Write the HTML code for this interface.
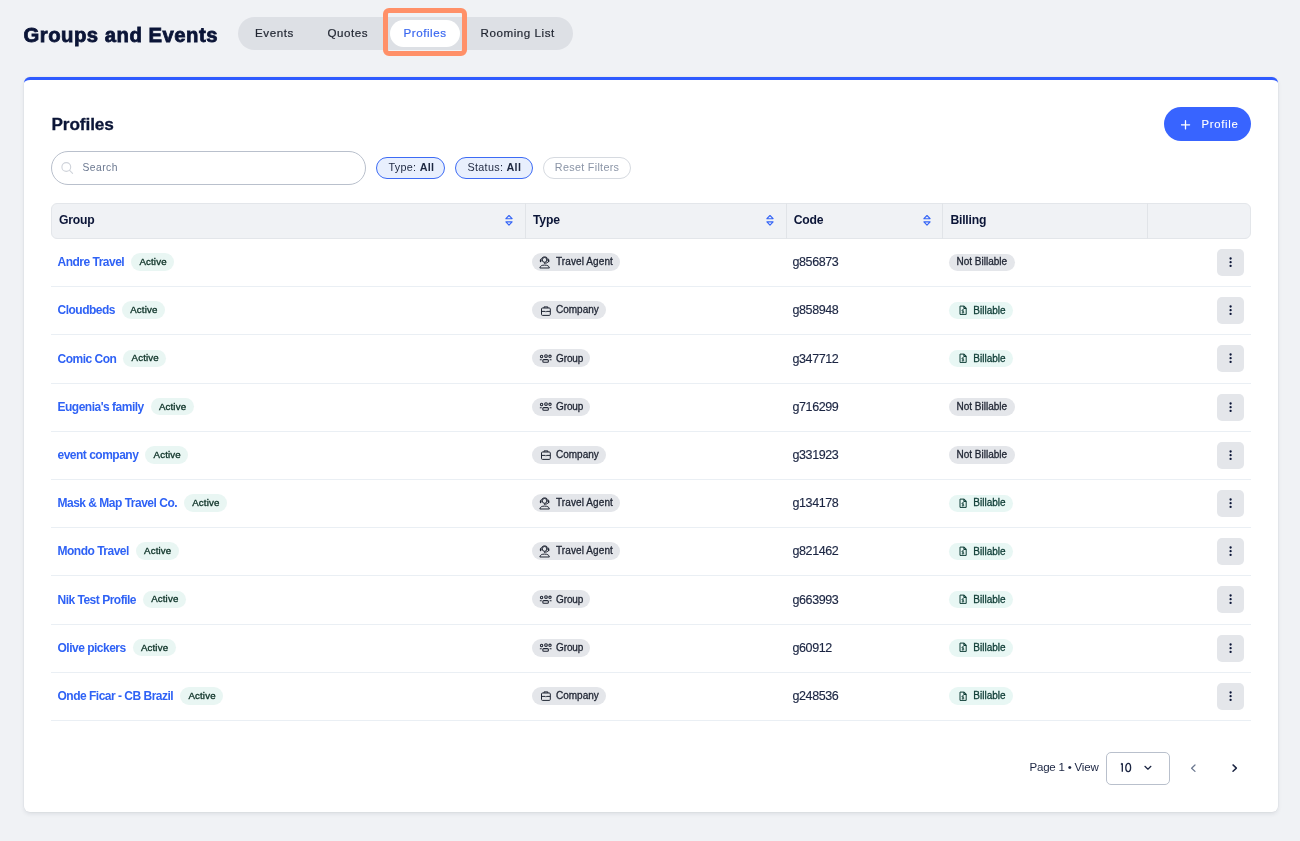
<!DOCTYPE html>
<html><head><meta charset="utf-8">
<style>
*{box-sizing:border-box;margin:0;padding:0}
html,body{width:1300px;height:841px;overflow:hidden}
body{background:#f0f2f5;font-family:"Liberation Sans",sans-serif;position:relative;color:#0b1537}
.abs{position:absolute;white-space:nowrap;line-height:1}
.title{left:23.5px;top:24.7px;font-size:20.3px;font-weight:bold;letter-spacing:.5px;color:#0b1537;-webkit-text-stroke:.8px #0b1537}
.tabs{left:238px;top:17px;width:335px;height:33px;border-radius:17px;background:#dde0e5}
.tab{font-size:11.6px;top:27.4px;color:#1f2430;letter-spacing:.55px;-webkit-text-stroke:.2px #1f2430}
.tabon{left:390px;top:20px;width:70px;height:27px;border-radius:14px;background:#fff}
.hl{left:383px;top:8px;width:84px;height:48px;border:5.5px solid #ff9068;border-radius:6px}
.card{left:24px;top:77px;width:1254px;height:735px;background:#fff;border-radius:6px;border-top:3px solid #2f5bff;box-shadow:0 0 0 .5px rgba(20,30,60,.05),0 2px 4px rgba(20,30,60,.09)}
.h2{left:51.5px;top:115.9px;font-size:17.2px;font-weight:bold;color:#0b1537;-webkit-text-stroke:.3px #0b1537;letter-spacing:-.1px}
.btn{left:1164px;top:107px;width:87px;height:34px;border-radius:17px;background:#3864ff}
.btnt{left:1201.5px;top:119px;font-size:11.3px;letter-spacing:.7px;color:#fff;-webkit-text-stroke:.1px #fff}
.search{left:51px;top:151px;width:315px;height:34px;border-radius:17px;border:1px solid #b9c0cc;background:#fff}
.searcht{left:82.5px;top:163px;font-size:10.3px;letter-spacing:.45px;color:#6b7890}
.chip{top:157px;height:22px;border-radius:11px;border:1px solid #3d6bf5;background:#e8effd}
.chipt{top:161.7px;font-size:10.8px;color:#1d2740;letter-spacing:.3px}
.thead{left:51px;top:203px;width:1200px;height:36px;border-radius:6px;border:1px solid #e3e6ea;background:#f0f2f5}
.sep{top:203px;width:1px;height:36px;background:#e1e4e8}
.th{top:213.7px;font-size:12.2px;font-weight:bold;color:#0b1537;letter-spacing:-.2px}
.sort{top:214px}
.r{position:absolute;left:51px;width:1200px;height:48.2px}
.r>span{position:absolute;white-space:nowrap;line-height:1}
.gcell{left:6.5px;top:14.8px;display:flex;align-items:flex-start;height:17.5px}
.link{font-size:12px;font-weight:bold;color:#2f62f5;letter-spacing:-.5px;margin-top:2.9px;margin-right:6.8px;line-height:1}
.bt{display:block;font-size:10px;line-height:1;-webkit-text-stroke:.3px currentColor;position:relative}
.badge{height:17.5px;border-radius:9px;padding:0 7.6px 0 8.4px;display:flex;align-items:flex-start}
.badge .bt{top:3.8px;font-size:9.7px;letter-spacing:.15px;-webkit-text-stroke:.35px currentColor}
.active{background:#e9f6f3;color:#0f3429}
.tbadge{left:481px;top:14.6px;height:18px;border-radius:9px;background:#e4e6ea;color:#1f2533;display:flex;align-items:flex-start;padding:0 7px}
.tbadge svg{margin:2.5px 5px 0 0}
.tbadge .bt{top:4.2px}
.code{left:741.5px;top:17.8px;font-size:12.5px;letter-spacing:-.4px;color:#1b2542;-webkit-text-stroke:.15px #1b2542}
.bbadge{left:898px;top:15px;height:17.6px;border-radius:9px;display:flex;align-items:flex-start;padding:0 7px}
.bbadge .bt{top:3.9px}
.billable{background:#e8f7f4;color:#0f3d36}
.billable svg{margin:3.3px 5.8px 0 2.5px}
.notbill{background:#e4e6ea;color:#1f2533;padding:0 7.5px}
.kebab{left:1166px;top:10.5px;width:27px;height:27px;border-radius:5px;background:#e4e6ea}
.kebab svg{display:block;fill:#0b1537}

.rl{left:51px;width:1200px;height:1px;background:#eaeff4}
.pgt{left:1029.5px;top:762.4px;font-size:11.5px;letter-spacing:-.2px;color:#1b2542}
.sel{left:1106px;top:752px;width:64px;height:33px;border-radius:5px;border:1px solid #b9c0cc;background:#fff}
.selt{left:1120px;top:762px;font-size:12.3px;letter-spacing:-1.1px;color:#1b2542}
</style></head><body><div style="position:absolute;left:0;top:0;width:1300px;height:841px;will-change:transform">
<div class="abs title">Groups and Events</div>
<div class="abs tabs"></div>
<div class="abs tabon"></div>
<div class="abs tab" style="left:255px">Events</div>
<div class="abs tab" style="left:327.5px">Quotes</div>
<div class="abs tab" style="left:403.5px;color:#3b68f0;-webkit-text-stroke:.2px #3b68f0">Profiles</div>
<div class="abs tab" style="left:480.5px">Rooming List</div>
<div class="abs hl"></div>

<div class="abs card"></div>
<div class="abs h2">Profiles</div>
<div class="abs btn"></div>
<svg class="abs" style="left:1181px;top:119.6px" width="10" height="10" viewBox="0 0 10 10"><path d="M4.5 .7v8.2M.4 4.8h8.2" stroke="#fff" stroke-width="1.3" stroke-linecap="round"/></svg>
<div class="abs btnt">Profile</div>
<div class="abs search"></div>
<svg class="abs" style="left:60px;top:161px" width="14" height="14" viewBox="0 0 14 14" fill="none" stroke="#cfd3da" stroke-width="1.1"><circle cx="6.3" cy="6" r="4.4"/><path d="M9.6 9.4l3 3" stroke-linecap="round"/></svg>
<div class="abs searcht">Search</div>
<div class="abs chip" style="left:376px;width:69px"></div>
<div class="abs chip" style="left:455px;width:78px"></div>
<div class="abs chip" style="left:543px;width:88px;border-color:#d6dae0;background:#fff"></div>
<div class="abs chipt" style="left:388.5px">Type: <b>All</b></div>
<div class="abs chipt" style="left:467.5px">Status: <b>All</b></div>
<div class="abs chipt" style="left:554.8px;color:#8a94a6">Reset Filters</div>

<div class="abs thead"></div>
<div class="abs sep" style="left:525px"></div>
<div class="abs sep" style="left:786px"></div>
<div class="abs sep" style="left:942px"></div>
<div class="abs sep" style="left:1147px"></div>
<div class="abs th" style="left:59px">Group</div>
<div class="abs th" style="left:533px">Type</div>
<div class="abs th" style="left:793.7px">Code</div>
<div class="abs th" style="left:950.4px">Billing</div>
<svg class="abs sort" style="left:505.3px" width="8" height="13" viewBox="0 0 8 13" fill="none" stroke="#3565f6" stroke-width="1.15" stroke-linejoin="round"><path d="M.9 4.7L4 1.5 7.1 4.7z"/><path d="M.9 7.8L4 11.1 7.1 7.8z"/></svg>
<svg class="abs sort" style="left:766.3px" width="8" height="13" viewBox="0 0 8 13" fill="none" stroke="#3565f6" stroke-width="1.15" stroke-linejoin="round"><path d="M.9 4.7L4 1.5 7.1 4.7z"/><path d="M.9 7.8L4 11.1 7.1 7.8z"/></svg>
<svg class="abs sort" style="left:923.3px" width="8" height="13" viewBox="0 0 8 13" fill="none" stroke="#3565f6" stroke-width="1.15" stroke-linejoin="round"><path d="M.9 4.7L4 1.5 7.1 4.7z"/><path d="M.9 7.8L4 11.1 7.1 7.8z"/></svg>

<div class="r" style="top:238.5px">
<span class="gcell"><span class="link">Andre Travel</span><span class="badge active"><span class="bt">Active</span></span></span>
<span class="tbadge"><svg width="12" height="13" viewBox="0 0 12 13" fill="none" stroke="#1f2533" stroke-width="1" stroke-linecap="round"><circle cx="5.6" cy="3.9" r="2.4"/><path d="M1.8 4.6 C1.6 -0.5 9.6 -0.5 9.4 4.6"/><path d="M1.6 4v1.5M9.6 4v1.5" stroke-width="1.5"/><path d="M9.2 5.9 C8.7 6.9 7.4 7.2 5.8 7.1"/><circle cx="5.6" cy="7.1" r=".7" fill="#1f2533" stroke="none"/><path d="M.9 11.6 C1.2 9.8 2.9 9.1 5.6 9.1 C8.3 9.1 10 9.8 10.3 11.6 Z"/></svg><span class="bt" style="letter-spacing:.1px">Travel Agent</span></span>
<span class="code">g856873</span>
<span class="bbadge notbill"><span class="bt">Not Billable</span></span>
<span class="kebab"><svg width="27" height="27" viewBox="0 0 27 27"><circle cx="13.6" cy="9.5" r="1.15"/><circle cx="13.6" cy="13.2" r="1.15"/><circle cx="13.6" cy="16.9" r="1.15"/></svg></span>
</div><div class="abs rl" style="top:286px"></div>
<div class="r" style="top:286.7px">
<span class="gcell"><span class="link">Cloudbeds</span><span class="badge active"><span class="bt">Active</span></span></span>
<span class="tbadge"><svg width="12" height="13" viewBox="0 0 12 13" fill="none" stroke="#1f2533" stroke-width="1" stroke-linejoin="round"><path d="M5 4V2.9h3.8V4"/><rect x="2.5" y="4" width="8.8" height="7.4" rx="1"/><path d="M2.5 7.4h3.7l.7.7.7-.7h3.7"/></svg><span class="bt">Company</span></span>
<span class="code">g858948</span>
<span class="bbadge billable"><svg width="9" height="11" viewBox="0 0 9 11" fill="none" stroke="#0f3d36" stroke-width="1" stroke-linejoin="round"><path d="M1 1.1h4.3L7.2 3.1v6.3H1z"/><path d="M5 1.1v2.2h2.2" stroke-width="1.3"/><path d="M3.9 4.3v4.2M5 5.1C4.7 4.7 2.9 4.7 2.9 5.6 2.9 6.4 5 6.2 5 7.1 5 7.9 3.1 7.9 2.8 7.5" stroke-width=".75"/></svg><span class="bt">Billable</span></span>
<span class="kebab"><svg width="27" height="27" viewBox="0 0 27 27"><circle cx="13.6" cy="9.5" r="1.15"/><circle cx="13.6" cy="13.2" r="1.15"/><circle cx="13.6" cy="16.9" r="1.15"/></svg></span>
</div><div class="abs rl" style="top:334px"></div>
<div class="r" style="top:334.9px">
<span class="gcell"><span class="link">Comic Con</span><span class="badge active"><span class="bt">Active</span></span></span>
<span class="tbadge"><svg width="13" height="13" viewBox="0 0 13 13" style="margin-right:4px" fill="none" stroke="#1f2533" stroke-width="1.05"><circle cx="2.6" cy="4.5" r="1.2"/><circle cx="7" cy="4.1" r="1.35"/><circle cx="11" cy="4.3" r="1.2"/><rect x="3.8" y="7.6" width="5.6" height="2.6" rx="1"/><path d="M1.3 7.7h1M11.1 7.7h1" stroke-linecap="round" stroke-width="1.1"/></svg><span class="bt" style="letter-spacing:-.1px">Group</span></span>
<span class="code">g347712</span>
<span class="bbadge billable"><svg width="9" height="11" viewBox="0 0 9 11" fill="none" stroke="#0f3d36" stroke-width="1" stroke-linejoin="round"><path d="M1 1.1h4.3L7.2 3.1v6.3H1z"/><path d="M5 1.1v2.2h2.2" stroke-width="1.3"/><path d="M3.9 4.3v4.2M5 5.1C4.7 4.7 2.9 4.7 2.9 5.6 2.9 6.4 5 6.2 5 7.1 5 7.9 3.1 7.9 2.8 7.5" stroke-width=".75"/></svg><span class="bt">Billable</span></span>
<span class="kebab"><svg width="27" height="27" viewBox="0 0 27 27"><circle cx="13.6" cy="9.5" r="1.15"/><circle cx="13.6" cy="13.2" r="1.15"/><circle cx="13.6" cy="16.9" r="1.15"/></svg></span>
</div><div class="abs rl" style="top:383px"></div>
<div class="r" style="top:383.1px">
<span class="gcell"><span class="link">Eugenia's family</span><span class="badge active"><span class="bt">Active</span></span></span>
<span class="tbadge"><svg width="13" height="13" viewBox="0 0 13 13" style="margin-right:4px" fill="none" stroke="#1f2533" stroke-width="1.05"><circle cx="2.6" cy="4.5" r="1.2"/><circle cx="7" cy="4.1" r="1.35"/><circle cx="11" cy="4.3" r="1.2"/><rect x="3.8" y="7.6" width="5.6" height="2.6" rx="1"/><path d="M1.3 7.7h1M11.1 7.7h1" stroke-linecap="round" stroke-width="1.1"/></svg><span class="bt" style="letter-spacing:-.1px">Group</span></span>
<span class="code">g716299</span>
<span class="bbadge notbill"><span class="bt">Not Billable</span></span>
<span class="kebab"><svg width="27" height="27" viewBox="0 0 27 27"><circle cx="13.6" cy="9.5" r="1.15"/><circle cx="13.6" cy="13.2" r="1.15"/><circle cx="13.6" cy="16.9" r="1.15"/></svg></span>
</div><div class="abs rl" style="top:431px"></div>
<div class="r" style="top:431.3px">
<span class="gcell"><span class="link">event company</span><span class="badge active"><span class="bt">Active</span></span></span>
<span class="tbadge"><svg width="12" height="13" viewBox="0 0 12 13" fill="none" stroke="#1f2533" stroke-width="1" stroke-linejoin="round"><path d="M5 4V2.9h3.8V4"/><rect x="2.5" y="4" width="8.8" height="7.4" rx="1"/><path d="M2.5 7.4h3.7l.7.7.7-.7h3.7"/></svg><span class="bt">Company</span></span>
<span class="code">g331923</span>
<span class="bbadge notbill"><span class="bt">Not Billable</span></span>
<span class="kebab"><svg width="27" height="27" viewBox="0 0 27 27"><circle cx="13.6" cy="9.5" r="1.15"/><circle cx="13.6" cy="13.2" r="1.15"/><circle cx="13.6" cy="16.9" r="1.15"/></svg></span>
</div><div class="abs rl" style="top:479px"></div>
<div class="r" style="top:479.5px">
<span class="gcell"><span class="link">Mask &amp; Map Travel Co.</span><span class="badge active"><span class="bt">Active</span></span></span>
<span class="tbadge"><svg width="12" height="13" viewBox="0 0 12 13" fill="none" stroke="#1f2533" stroke-width="1" stroke-linecap="round"><circle cx="5.6" cy="3.9" r="2.4"/><path d="M1.8 4.6 C1.6 -0.5 9.6 -0.5 9.4 4.6"/><path d="M1.6 4v1.5M9.6 4v1.5" stroke-width="1.5"/><path d="M9.2 5.9 C8.7 6.9 7.4 7.2 5.8 7.1"/><circle cx="5.6" cy="7.1" r=".7" fill="#1f2533" stroke="none"/><path d="M.9 11.6 C1.2 9.8 2.9 9.1 5.6 9.1 C8.3 9.1 10 9.8 10.3 11.6 Z"/></svg><span class="bt" style="letter-spacing:.1px">Travel Agent</span></span>
<span class="code">g134178</span>
<span class="bbadge billable"><svg width="9" height="11" viewBox="0 0 9 11" fill="none" stroke="#0f3d36" stroke-width="1" stroke-linejoin="round"><path d="M1 1.1h4.3L7.2 3.1v6.3H1z"/><path d="M5 1.1v2.2h2.2" stroke-width="1.3"/><path d="M3.9 4.3v4.2M5 5.1C4.7 4.7 2.9 4.7 2.9 5.6 2.9 6.4 5 6.2 5 7.1 5 7.9 3.1 7.9 2.8 7.5" stroke-width=".75"/></svg><span class="bt">Billable</span></span>
<span class="kebab"><svg width="27" height="27" viewBox="0 0 27 27"><circle cx="13.6" cy="9.5" r="1.15"/><circle cx="13.6" cy="13.2" r="1.15"/><circle cx="13.6" cy="16.9" r="1.15"/></svg></span>
</div><div class="abs rl" style="top:527px"></div>
<div class="r" style="top:527.7px">
<span class="gcell"><span class="link">Mondo Travel</span><span class="badge active"><span class="bt">Active</span></span></span>
<span class="tbadge"><svg width="12" height="13" viewBox="0 0 12 13" fill="none" stroke="#1f2533" stroke-width="1" stroke-linecap="round"><circle cx="5.6" cy="3.9" r="2.4"/><path d="M1.8 4.6 C1.6 -0.5 9.6 -0.5 9.4 4.6"/><path d="M1.6 4v1.5M9.6 4v1.5" stroke-width="1.5"/><path d="M9.2 5.9 C8.7 6.9 7.4 7.2 5.8 7.1"/><circle cx="5.6" cy="7.1" r=".7" fill="#1f2533" stroke="none"/><path d="M.9 11.6 C1.2 9.8 2.9 9.1 5.6 9.1 C8.3 9.1 10 9.8 10.3 11.6 Z"/></svg><span class="bt" style="letter-spacing:.1px">Travel Agent</span></span>
<span class="code">g821462</span>
<span class="bbadge billable"><svg width="9" height="11" viewBox="0 0 9 11" fill="none" stroke="#0f3d36" stroke-width="1" stroke-linejoin="round"><path d="M1 1.1h4.3L7.2 3.1v6.3H1z"/><path d="M5 1.1v2.2h2.2" stroke-width="1.3"/><path d="M3.9 4.3v4.2M5 5.1C4.7 4.7 2.9 4.7 2.9 5.6 2.9 6.4 5 6.2 5 7.1 5 7.9 3.1 7.9 2.8 7.5" stroke-width=".75"/></svg><span class="bt">Billable</span></span>
<span class="kebab"><svg width="27" height="27" viewBox="0 0 27 27"><circle cx="13.6" cy="9.5" r="1.15"/><circle cx="13.6" cy="13.2" r="1.15"/><circle cx="13.6" cy="16.9" r="1.15"/></svg></span>
</div><div class="abs rl" style="top:575px"></div>
<div class="r" style="top:575.9px">
<span class="gcell"><span class="link">Nik Test Profile</span><span class="badge active"><span class="bt">Active</span></span></span>
<span class="tbadge"><svg width="13" height="13" viewBox="0 0 13 13" style="margin-right:4px" fill="none" stroke="#1f2533" stroke-width="1.05"><circle cx="2.6" cy="4.5" r="1.2"/><circle cx="7" cy="4.1" r="1.35"/><circle cx="11" cy="4.3" r="1.2"/><rect x="3.8" y="7.6" width="5.6" height="2.6" rx="1"/><path d="M1.3 7.7h1M11.1 7.7h1" stroke-linecap="round" stroke-width="1.1"/></svg><span class="bt" style="letter-spacing:-.1px">Group</span></span>
<span class="code">g663993</span>
<span class="bbadge billable"><svg width="9" height="11" viewBox="0 0 9 11" fill="none" stroke="#0f3d36" stroke-width="1" stroke-linejoin="round"><path d="M1 1.1h4.3L7.2 3.1v6.3H1z"/><path d="M5 1.1v2.2h2.2" stroke-width="1.3"/><path d="M3.9 4.3v4.2M5 5.1C4.7 4.7 2.9 4.7 2.9 5.6 2.9 6.4 5 6.2 5 7.1 5 7.9 3.1 7.9 2.8 7.5" stroke-width=".75"/></svg><span class="bt">Billable</span></span>
<span class="kebab"><svg width="27" height="27" viewBox="0 0 27 27"><circle cx="13.6" cy="9.5" r="1.15"/><circle cx="13.6" cy="13.2" r="1.15"/><circle cx="13.6" cy="16.9" r="1.15"/></svg></span>
</div><div class="abs rl" style="top:624px"></div>
<div class="r" style="top:624.1px">
<span class="gcell"><span class="link">Olive pickers</span><span class="badge active"><span class="bt">Active</span></span></span>
<span class="tbadge"><svg width="13" height="13" viewBox="0 0 13 13" style="margin-right:4px" fill="none" stroke="#1f2533" stroke-width="1.05"><circle cx="2.6" cy="4.5" r="1.2"/><circle cx="7" cy="4.1" r="1.35"/><circle cx="11" cy="4.3" r="1.2"/><rect x="3.8" y="7.6" width="5.6" height="2.6" rx="1"/><path d="M1.3 7.7h1M11.1 7.7h1" stroke-linecap="round" stroke-width="1.1"/></svg><span class="bt" style="letter-spacing:-.1px">Group</span></span>
<span class="code">g60912</span>
<span class="bbadge billable"><svg width="9" height="11" viewBox="0 0 9 11" fill="none" stroke="#0f3d36" stroke-width="1" stroke-linejoin="round"><path d="M1 1.1h4.3L7.2 3.1v6.3H1z"/><path d="M5 1.1v2.2h2.2" stroke-width="1.3"/><path d="M3.9 4.3v4.2M5 5.1C4.7 4.7 2.9 4.7 2.9 5.6 2.9 6.4 5 6.2 5 7.1 5 7.9 3.1 7.9 2.8 7.5" stroke-width=".75"/></svg><span class="bt">Billable</span></span>
<span class="kebab"><svg width="27" height="27" viewBox="0 0 27 27"><circle cx="13.6" cy="9.5" r="1.15"/><circle cx="13.6" cy="13.2" r="1.15"/><circle cx="13.6" cy="16.9" r="1.15"/></svg></span>
</div><div class="abs rl" style="top:672px"></div>
<div class="r" style="top:672.3px">
<span class="gcell"><span class="link">Onde Ficar - CB Brazil</span><span class="badge active"><span class="bt">Active</span></span></span>
<span class="tbadge"><svg width="12" height="13" viewBox="0 0 12 13" fill="none" stroke="#1f2533" stroke-width="1" stroke-linejoin="round"><path d="M5 4V2.9h3.8V4"/><rect x="2.5" y="4" width="8.8" height="7.4" rx="1"/><path d="M2.5 7.4h3.7l.7.7.7-.7h3.7"/></svg><span class="bt">Company</span></span>
<span class="code">g248536</span>
<span class="bbadge billable"><svg width="9" height="11" viewBox="0 0 9 11" fill="none" stroke="#0f3d36" stroke-width="1" stroke-linejoin="round"><path d="M1 1.1h4.3L7.2 3.1v6.3H1z"/><path d="M5 1.1v2.2h2.2" stroke-width="1.3"/><path d="M3.9 4.3v4.2M5 5.1C4.7 4.7 2.9 4.7 2.9 5.6 2.9 6.4 5 6.2 5 7.1 5 7.9 3.1 7.9 2.8 7.5" stroke-width=".75"/></svg><span class="bt">Billable</span></span>
<span class="kebab"><svg width="27" height="27" viewBox="0 0 27 27"><circle cx="13.6" cy="9.5" r="1.15"/><circle cx="13.6" cy="13.2" r="1.15"/><circle cx="13.6" cy="16.9" r="1.15"/></svg></span>
</div><div class="abs rl" style="top:720px"></div>
<div class="abs pgt">Page 1 • View</div>
<div class="abs sel"></div>
<svg class="abs" style="left:1118px;top:761px" width="16" height="13" viewBox="0 0 16 13" fill="none" stroke="#1b2542" stroke-width="1.35"><path d="M4.3 2.3V10.7M3 3.5L4.3 2.3"/><ellipse cx="10.2" cy="6.5" rx="2.4" ry="4.05"/></svg>
<svg class="abs" style="left:1142.5px;top:764px" width="10" height="7" viewBox="0 0 10 7" fill="none" stroke="#1b2542" stroke-width="1.2" stroke-linecap="round" stroke-linejoin="round"><path d="M1.9 2.3L4.9 5.2 7.9 2.3"/></svg>
<svg class="abs" style="left:1189px;top:763px" width="8" height="10" viewBox="0 0 8 10" fill="none" stroke="#6b7890" stroke-width="1.25" stroke-linecap="round" stroke-linejoin="round"><path d="M6 2L2.6 5.2 6 8.4"/></svg>
<svg class="abs" style="left:1230.5px;top:763px" width="8" height="10" viewBox="0 0 8 10" fill="none" stroke="#1b2542" stroke-width="1.45" stroke-linecap="round" stroke-linejoin="round"><path d="M2 1.9L5.4 5.1 2 8.3"/></svg>
</div></body></html>
